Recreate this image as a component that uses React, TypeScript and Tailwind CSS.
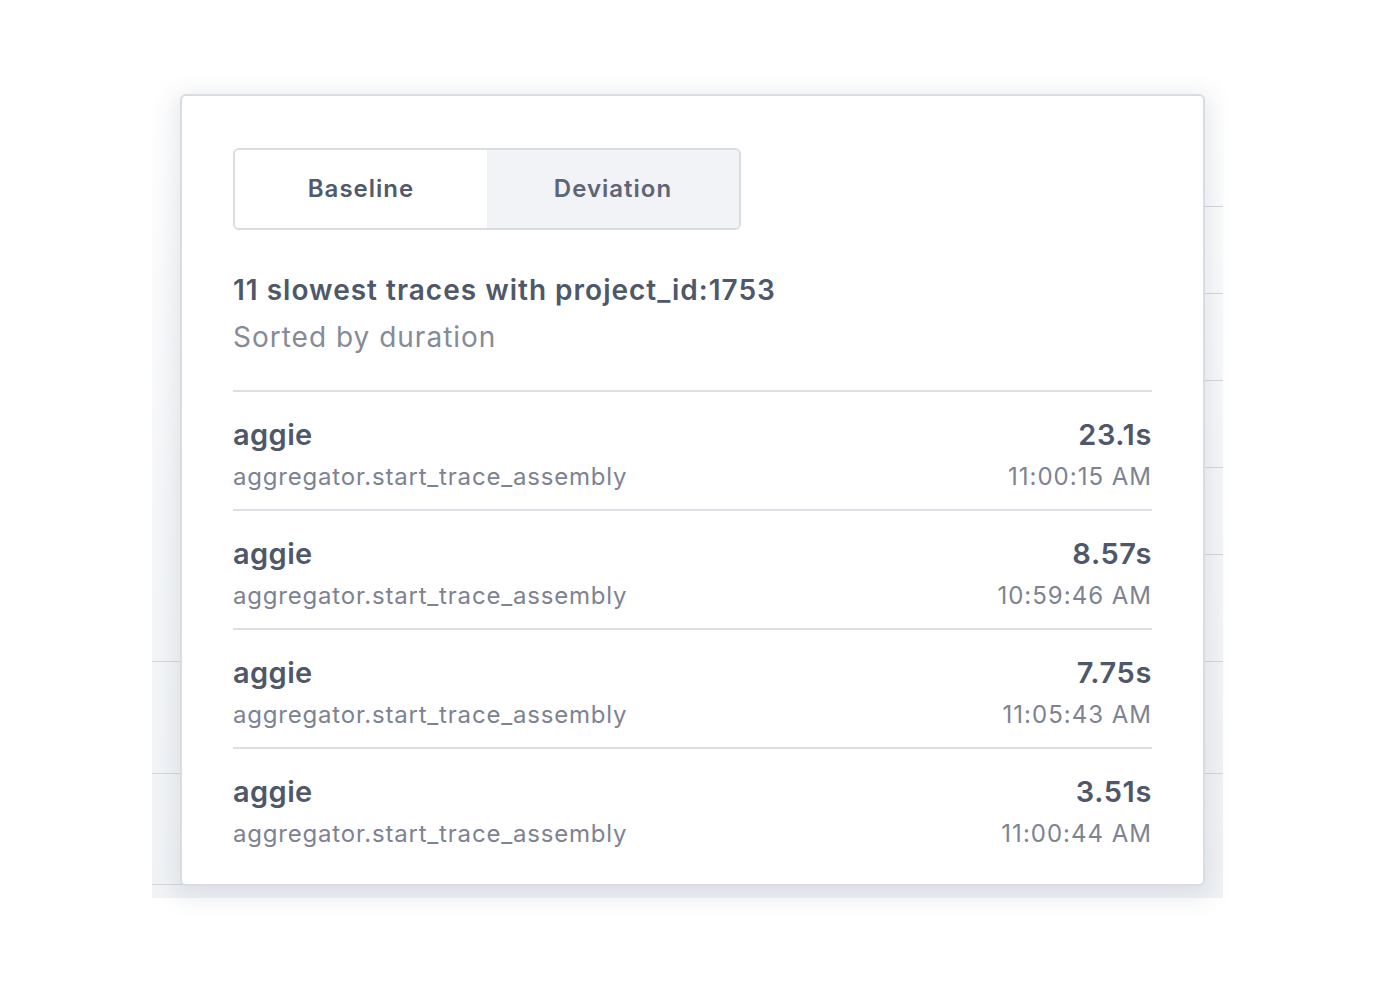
import React from 'react';

type Trace = { service: string; op: string; duration: string; time: string };

const traces: Trace[] = [
  { service: 'aggie', op: 'aggregator.start_trace_assembly', duration: '23.1s', time: '11:00:15 AM' },
  { service: 'aggie', op: 'aggregator.start_trace_assembly', duration: '8.57s', time: '10:59:46 AM' },
  { service: 'aggie', op: 'aggregator.start_trace_assembly', duration: '7.75s', time: '11:05:43 AM' },
  { service: 'aggie', op: 'aggregator.start_trace_assembly', duration: '3.51s', time: '11:00:44 AM' },
];

// faint chart gridlines peeking out behind the popover
const gridRight = [206, 293, 380, 467, 554, 661, 773];
const gridLeft = [661, 773, 884];

export default function App() {
  return (
    <div className="relative h-[985px] w-full bg-white font-['Inter',sans-serif] overflow-hidden">
      {/* Chart behind */}
      <div className="absolute left-[152px] top-[78px] h-[820px] w-[1071px] bg-gradient-to-b from-white via-[#f6f7f9] to-[#f1f3f6]">
        {gridRight.map((y) => (
          <div key={'r' + y} className="absolute right-0 h-px w-[20px] bg-[#d3d6dc]" style={{ top: y - 78 }} />
        ))}
        {gridLeft.map((y) => (
          <div key={'l' + y} className="absolute left-0 h-px w-[30px] bg-[#d3d6dc]" style={{ top: y - 78 }} />
        ))}
      </div>

      {/* Popover */}
      <div className="absolute left-[180px] top-[94px] w-[1025px] rounded-md border-2 border-[#d9dce1] bg-white px-[51px] pt-[52px] pb-[18px] shadow-[0_6px_22px_6px_rgba(120,130,150,0.16)]">
        <div className="flex h-[82px] w-[508px] overflow-hidden rounded-md border-2 border-[#d9dce1]">
          <div className="flex flex-1 items-center justify-center bg-white text-[24px] font-semibold tracking-[1px] text-[#515a6d]">
            Baseline
          </div>
          <div className="flex flex-1 items-center justify-center bg-[#f1f3f6] text-[24px] font-semibold tracking-[1px] text-[#5d6576]">
            Deviation
          </div>
        </div>

        <div className="mt-[42px] text-[28px] font-semibold leading-[36px] tracking-[1px] text-[#4f586b]">
          11 slowest traces with project_id:1753
        </div>
        <div className="mt-[11px] text-[28px] leading-[36px] tracking-[1px] text-[#858b98]">Sorted by duration</div>

        <div className="mt-[35px] border-t-2 border-[#dcdfe4]">
          {traces.map((t, i) => (
            <div
              key={i}
              className={'flex items-start justify-between pt-[24px] pb-[13px] ' + (i < traces.length - 1 ? 'border-b-2 border-[#dcdfe4]' : '')}
            >
              <div className="flex flex-col">
                <span className="text-[29px] font-semibold leading-[38px] tracking-[0.4px] text-[#4f586b]">{t.service}</span>
                <span className="mt-[4px] text-[24px] leading-[38px] tracking-[0.8px] text-[#7d8392]">{t.op}</span>
              </div>
              <div className="flex flex-col items-end">
                <span className="text-[29px] font-semibold leading-[38px] tracking-[0.6px] text-[#4f586b]">{t.duration}</span>
                <span className="mt-[4px] text-[24px] leading-[38px] tracking-[1px] text-[#7d8392]">{t.time}</span>
              </div>
            </div>
          ))}
        </div>
      </div>
    </div>
  );
}
